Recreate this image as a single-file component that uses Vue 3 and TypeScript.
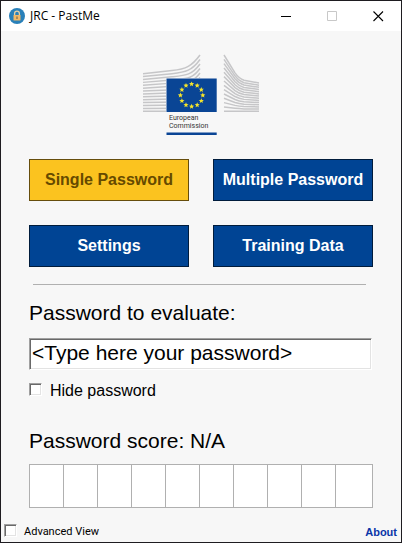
<script setup lang="ts">
import { computed, ref } from 'vue'

type View = 'single' | 'multiple' | 'settings' | 'training'

const views: { id: View; label: string }[] = [
  { id: 'single', label: 'Single Password' },
  { id: 'multiple', label: 'Multiple Password' },
  { id: 'settings', label: 'Settings' },
  { id: 'training', label: 'Training Data' },
]

const active = ref<View>('single')
const password = ref('<Type here your password>')
const hidden = ref(false)
const advanced = ref(false)
const score = ref<number | null>(null)
const scoreText = computed(() => (score.value === null ? 'N/A' : String(score.value)))

// Sweeping lines on either side of the flag
const LINES = 14
const leftLines = Array.from({ length: LINES }, (_, i) => {
  const t = i / (LINES - 1)
  const start = 19.7 + t * 37.6
  const bend = 16.6 + t * 40.7
  const end = 1 + i * 4.5
  if (i > 5) return `M1 ${start} L40 ${bend}`
  return `M1 ${start} L30 ${bend} C44 ${bend - 1.5} 50 ${end + 11} 58 ${end}`
})
const rightLines = Array.from({ length: LINES }, (_, i) => {
  const t = i / (LINES - 1)
  const start = 1 + t * 56.3
  const knee = 24.5 + t * 32.8
  const end = 29 + t * 28.3
  return `M82 ${start} L93 ${start + (knee - start) * 0.76} Q97 ${knee} 102 ${knee + (end - knee) * 0.4} L117 ${end}`
})

function starPoints(cx: number, cy: number, r: number): string {
  return Array.from({ length: 10 }, (_, i) => {
    const a = -Math.PI / 2 + (i * Math.PI) / 5
    const d = i % 2 ? r * 0.45 : r
    return `${(cx + d * Math.cos(a)).toFixed(2)},${(cy + d * Math.sin(a)).toFixed(2)}`
  }).join(' ')
}
const stars = Array.from({ length: 12 }, (_, i) => {
  const a = (i * Math.PI) / 6
  return starPoints(49.6 + 11.2 * Math.cos(a), 41.3 + 11.2 * Math.sin(a), 2.7)
})
</script>

<template>
  <div class="window">
    <header class="titlebar">
      <svg class="app-icon" viewBox="0 0 16 16" aria-hidden="true">
        <circle cx="8" cy="8" r="8" fill="#2980b9" />
        <path d="M5.6 7.5V5.6a2.4 2.4 0 0 1 4.8 0v1.9" fill="none" stroke="#e6cfa4" stroke-width="1.3" />
        <rect x="4.5" y="7" width="7" height="5.6" rx=".5" fill="#f0b868" />
        <path d="M8 8.6v2.3" stroke="#806a4c" stroke-width="1.2" />
      </svg>
      <span class="title">JRC - PastMe</span>
      <div class="controls">
        <button type="button" aria-label="Minimize">
          <svg viewBox="0 0 11 11"><path d="M0 5.5h10" stroke="#000" /></svg>
        </button>
        <button type="button" aria-label="Maximize" disabled>
          <svg viewBox="0 0 11 11"><path d="M.5.5h9v9h-9z" fill="none" stroke="#c8c8c8" /></svg>
        </button>
        <button type="button" aria-label="Close">
          <svg viewBox="0 0 11 11"><path d="M.5.5l9.5 9.5M10 .5L.5 10" stroke="#000" stroke-width="1.1" /></svg>
        </button>
      </div>
    </header>

    <main class="content">
      <svg class="logo" viewBox="0 0 118 82" role="img" aria-label="European Commission">
        <g fill="none" stroke="#c6c6c8" stroke-width="1.5">
          <path v-for="(d, i) in leftLines" :key="'l' + i" :d="d" />
          <path v-for="(d, i) in rightLines" :key="'r' + i" :d="d" />
        </g>
        <rect x="24" y="24" width="51" height="34.5" fill="#f7f7f7" />
        <rect x="24.5" y="24.5" width="50.2" height="33.5" fill="#0a4595" />
        <polygon v-for="(p, i) in stars" :key="'s' + i" :points="p" fill="#f6e52a" />
        <text x="27" y="66">European</text>
        <text x="27" y="74">Commission</text>
        <rect x="24.5" y="78.5" width="50.2" height="2.5" fill="#0a4595" />
      </svg>

      <nav class="views">
        <button
          v-for="v in views"
          :key="v.id"
          type="button"
          class="view"
          :class="{ active: active === v.id }"
          @click="active = v.id"
        >{{ v.label }}</button>
      </nav>

      <hr class="rule" />

      <label class="heading" for="password">Password to evaluate:</label>
      <input id="password" v-model="password" class="field" :type="hidden ? 'password' : 'text'" />
      <label class="hide"><input v-model="hidden" type="checkbox" class="check" />Hide password</label>

      <p class="heading score">Password score: {{ scoreText }}</p>
      <div class="meter">
        <span v-for="n in 10" :key="n" class="cell"></span>
      </div>
    </main>

    <footer class="footer">
      <label class="advanced"><input v-model="advanced" type="checkbox" class="check" />Advanced View</label>
      <a class="about" href="#about">About</a>
    </footer>
  </div>
</template>

<style>
body {
  margin: 0;
}
</style>

<style scoped>
.window {
  box-sizing: border-box;
  display: flex;
  flex-direction: column;
  min-height: 100vh;
  border: 1px solid #1e1c20;
  background: #f7f7f7;
  color: #000;
  font-family: "Liberation Sans", Arial, sans-serif;
}
.titlebar {
  display: flex;
  align-items: center;
  height: 30px;
  padding-left: 8px;
  background: #fff;
}
.app-icon {
  width: 16px;
  height: 16px;
}
.title {
  margin-left: 5px;
  font: 12px/16px "Open Sans", "Noto Sans", sans-serif;
}
.controls {
  display: flex;
  height: 100%;
  margin-left: auto;
}
.controls button {
  display: flex;
  align-items: center;
  justify-content: center;
  width: 46px;
  padding: 0;
  border: 0;
  background: none;
}
.controls svg {
  width: 11px;
  height: 11px;
}
.content {
  display: flex;
  flex-direction: column;
  padding: 23px 28px 0;
}
.logo {
  align-self: center;
  width: 118px;
  height: 82px;
}
.logo text {
  font: 7px Roboto, sans-serif;
  fill: #333;
}
.views {
  display: grid;
  grid-template-columns: 1fr 1fr;
  gap: 24px;
  margin-top: 23px;
}
.view {
  height: 42px;
  padding: 0;
  border: 1px solid #001c3c;
  background: #004494;
  color: #fff;
  font: bold 16px/20px "Liberation Sans", Arial, sans-serif;
  white-space: nowrap;
}
.view.active {
  border-color: #664d0c;
  background: #fbc31f;
  color: #664a00;
}
.rule {
  align-self: stretch;
  height: 1px;
  margin: 17px 7px 0 4px;
  border: 0;
  background: #b0b0b0;
}
.heading {
  margin: 16px 0 0;
  font-size: 21px;
  line-height: 24px;
}
.field {
  box-sizing: border-box;
  width: calc(100% - 1px);
  height: 32px;
  margin-top: 13px;
  padding: 0 2px 2px;
  border: 1px solid;
  border-color: #a0a0a0 #fff #fff #a0a0a0;
  border-radius: 0;
  outline: 0;
  background: #fff;
  box-shadow: inset 1px 1px #696969, inset -1px -1px #e3e3e3;
  color: #000;
  font: 21px/24px "Liberation Sans", Arial, sans-serif;
}
.hide,
.advanced {
  display: flex;
  align-items: flex-start;
}
.hide {
  gap: 8px;
  margin-top: 11px;
  font-size: 16px;
  line-height: 20px;
}
.check {
  appearance: none;
  box-sizing: border-box;
  width: 13px;
  height: 13px;
  margin: 1px 0 0;
  border: 1px solid;
  border-color: #a0a0a0 #fff #fff #a0a0a0;
  background: #fff;
  box-shadow: inset 1px 1px #696969, inset -1px -1px #e3e3e3;
}
.hide .check {
  margin-top: 2px;
}
.check:checked {
  background: #004494;
}
.score {
  margin-top: 28px;
}
.meter {
  display: grid;
  grid-template-columns: repeat(9, 34fr) 37fr;
  height: 44px;
  box-sizing: border-box;
  margin-top: 11px;
  border: 1px solid #b0b0b0;
  border-left: 0;
  background: #fff;
}
.cell {
  border-left: 1px solid #b0b0b0;
}
.footer {
  display: flex;
  align-items: center;
  justify-content: space-between;
  margin-top: auto;
  padding: 0 4px 1px 3px;
}
.advanced {
  gap: 7px;
  font: 11px/18px Roboto, sans-serif;
}
.about {
  color: #0a35a8;
  font-size: 11px;
  font-weight: bold;
  line-height: 18px;
  text-decoration: none;
}
</style>
